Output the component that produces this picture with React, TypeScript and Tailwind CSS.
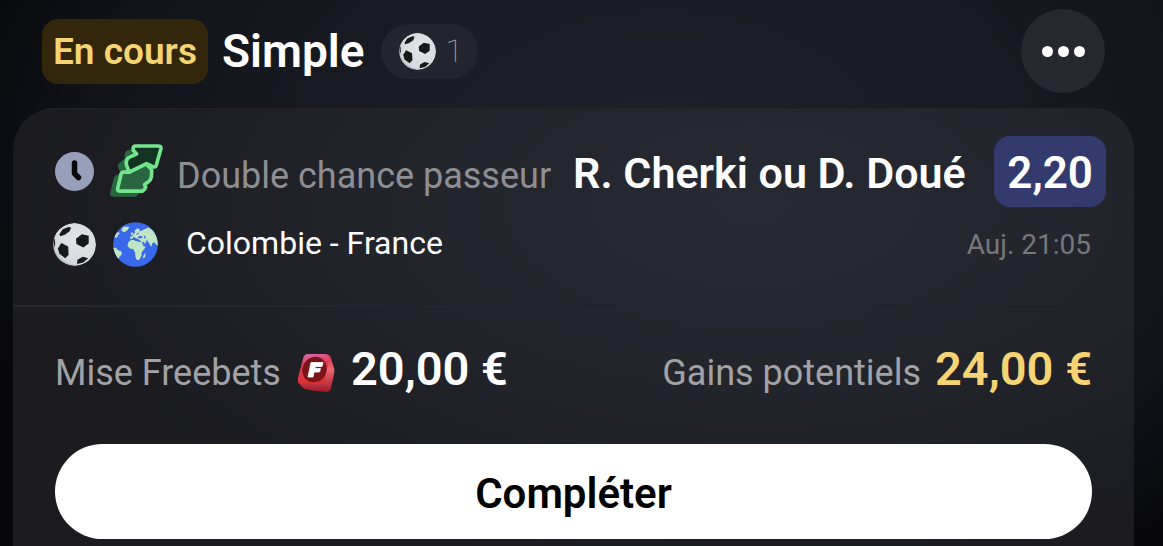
import React from "react";

function Ball({ className }: { className: string }) {
  return (
    <svg viewBox="0 0 44 44" className={className} aria-hidden="true">
      <defs>
        <clipPath id="ballClip">
          <circle cx="22" cy="22" r="22" />
        </clipPath>
        <radialGradient id="ballShade" cx="0.58" cy="0.42" r="0.64">
          <stop offset="0" stopColor="#e2e6ea" />
          <stop offset="0.84" stopColor="#d6dadf" />
          <stop offset="1" stopColor="#969da3" />
        </radialGradient>
      </defs>
      <g clipPath="url(#ballClip)">
        <circle cx="22" cy="22" r="22" fill="url(#ballShade)" />
        <g fill="#17181a">
          <path d="M23.500 16 29.500 11.500 36.500 13 36.500 21 31 25 24 21.500Z" />
          <path d="M6.500 11.500 10 6.500 16 4 18.500 4.500 17 8.500 12 12 7.500 13.500Z" />
          <path d="M5 26 8.500 20.500 15.500 24 16 32.500 12.500 36 6.500 31.500Z" />
          <path d="M25 37.500 30.500 34.500 36 36 31 40.500 24.500 42Z" />
          <path d="M0.800 17 1.800 16 2.200 22 1 25Z" />
        </g>
      </g>
    </svg>
  );
}

function Globe() {
  return (
    <svg viewBox="218 275 137 137" className="size-[45px] shrink-0" aria-hidden="true">
      <defs>
        <clipPath id="globeClip">
          <circle cx="286.500" cy="343.500" r="68" />
        </clipPath>
      </defs>
      <g clipPath="url(#globeClip)">
        <rect x="218" y="275" width="137" height="137" fill="#3a68ea" />
        <g fill="#bfe5c4">
          <path d="M246 293 252 289 268 290 262 300 252 306 244 302Z" />
          <path d="M226 308 236 306 239 310 234 314 230 322 220 322Z" />
          <path d="M216 352 228 354 234 361 244 365 245 373 238 380 235 388 226 382 216 368Z" />
          <path d="M265 336 273 330 284 330 296 334 305 337 311 349 318 350 311 360 305 367 305 378 298 390 290 391 286 380 285 367 280 358 269 356 262 347Z" />
          <path d="M313 374 318 368 316 381 311 387 309 381Z" />
          <path d="M270 326 271 319 278 318 278 313 285 308 284 301 292 294 300 297 298 303 304 302 315 296 326 292 345 304 356 322 356 348 350 344 344 337 338 340 335 350 331 346 326 336 320 334 314 344 306 340 302 333 294 327 286 323 281 320 276 327Z" />
          <path d="M273 309 277 305 279 313 273 315Z" />
        </g>
        <g fill="#3a68ea">
          <path d="M294 320 302 317 309 321 303 325 294 324Z" />
          <path d="M312 316 317 319 317 327 313 324Z" />
          <path d="M308 334 313 338 317 345 313 346 306 337Z" />
          <path d="M319 330 326 335 320 336Z" />
          <path d="M292 309 298 307 294 313 288 312Z" />
          <path d="M278 328 290 327 300 331 302 335 288 333Z" />
        </g>
      </g>
    </svg>
  );
}

function Clock() {
  return (
    <svg viewBox="0 0 39 39" className="size-[39px] shrink-0" aria-hidden="true">
      <circle cx="19.500" cy="19.500" r="19.500" fill="#989fba" />
      <path d="M19.500 11V21.500L23.500 25.500" fill="none" stroke="#08080c" strokeWidth="5.500" strokeLinecap="round" strokeLinejoin="round" />
    </svg>
  );
}

function Arrows() {
  return (
    <svg viewBox="206 41 164 168" className="h-[55px] w-[54px] shrink-0" aria-hidden="true">
      <path
        d="M273 58 300 60 330 110 318 170 288 202H222Q206 202 209 190L220 146Q222 136 234 134L240 128Q232 112 232 104L254 84Q250 64 262 60Z"
        fill="#2a6541"
      />
      <g stroke="#73e68c" strokeWidth="11" strokeLinejoin="round" strokeLinecap="round">
        <path d="M250 127 267 127 320 101 326 110 Q337 116 336 126L335 142Q334 150 324 158L314 165 318 172Q317 178 308 185H238Q230 185 232 177L242 135Q243 128 250 127Z" fill="#2a6541" />
        <path d="M285 47H356Q366 47 364 56L350 106Q347 114 340 110L320 101 267 127 259 105Q256 90 265 83L290 71 280 61Q277 48 285 47Z" fill="#153322" />
      </g>
    </svg>
  );
}

function Freebet() {
  return (
    <svg viewBox="0 0 38 40" className="h-[40px] w-[38px] shrink-0" aria-hidden="true">
      <defs>
        <linearGradient id="chipFace" x1="0.3" y1="0" x2="0.5" y2="1">
          <stop offset="0" stopColor="#d56bae" />
          <stop offset="0.35" stopColor="#dc4156" />
          <stop offset="1" stopColor="#d92d2d" />
        </linearGradient>
        <linearGradient id="chipSide" x1="0" y1="0" x2="0" y2="1">
          <stop offset="0" stopColor="#c62f43" />
          <stop offset="0.4" stopColor="#ef6870" />
          <stop offset="1" stopColor="#a21724" />
        </linearGradient>
      </defs>
      <path d="M11 1H29Q33 1 34 5L37 15Q38 18 37 21L34 35Q33 39 29 39L12 37Q8 37 5 34L1 29 20 12Z" fill="url(#chipSide)" />
      <path d="M11 1H27Q33 1 32 7L28 26Q27 31 22 31L4 30Q0 30 1 25L6 6Q7 1 11 1Z" fill="url(#chipFace)" />
      <ellipse cx="17.500" cy="16.500" rx="12" ry="13" transform="rotate(28 17.500 16.500)" fill="#7c141a" />
      <path d="M14 9.500H26L25 13.500H18.500L18 15.500H23.500L22.500 19H17L16 24H11Z" fill="#fff" stroke="#fff" strokeWidth="0.800" strokeLinejoin="round" />
    </svg>
  );
}

export default function App() {
  return (
    <main className="flex min-h-screen flex-col bg-[#08080c] bg-[radial-gradient(ellipse_62%_90%_at_57%_30%,#1e212d_0%,#191b24_45%,#111319_80%,#08080c_100%)] pr-[29px] pl-[13px] font-['Roboto','Liberation_Sans',sans-serif] text-white">
      <header className="flex items-center pt-[9px] pr-[29px] pb-[15px] pl-[29px]">
        <span className="flex h-[65px] items-center rounded-2xl bg-[#33270b] px-[11px] text-[37px] leading-none font-semibold text-[#f6d373]">
          En cours
        </span>
        <h1 className="ml-[14px] text-[46px] leading-none font-semibold">Simple</h1>
        <span className="ml-4 flex h-[55px] items-center gap-[10px] rounded-full bg-[#23252e] pr-[15px] pl-[18px]">
          <Ball className="size-[37px] shrink-0" />
          <span className="text-[32px] leading-none font-thin text-[#b0b1b5]">1</span>
        </span>
        <button type="button" aria-label="Options" className="ml-auto flex size-[84px] items-center justify-center gap-[5px] rounded-full bg-[#262830]">
          <span className="size-[11px] rounded-full bg-white" />
          <span className="size-[11px] rounded-full bg-white" />
          <span className="size-[11px] rounded-full bg-white" />
        </button>
      </header>

      <section className="grow rounded-t-[42px] border-t border-white/3 bg-[#1b1b20] bg-[radial-gradient(ellipse_66%_85%_at_66%_22%,#272a33_0%,#23252d_45%,#1e1f25_80%,#1b1b20_100%)]">
        <div className="flex items-center pt-[27px] pr-7 pl-[42px]">
          <Clock />
          <span className="ml-[15px] flex">
            <Arrows />
          </span>
          <p className="ml-[14px] flex items-baseline gap-[22px] pt-1 whitespace-nowrap">
            <span className="text-[36px] leading-none text-[#8f8f93]">Double chance passeur</span>
            <strong className="text-[43px] leading-none font-semibold">R. Cherki ou D. Doué</strong>
          </p>
          <span className="ml-auto flex h-[71px] items-center rounded-2xl bg-[#333a6e] px-[13px] pt-0.5 text-[44px] leading-none font-semibold">
            2,20
          </span>
        </div>

        <div className="mt-[15px] flex items-center pr-[43px] pb-[38px] pl-10">
          <Ball className="size-[43px] shrink-0" />
          <span className="ml-[17px] flex">
            <Globe />
          </span>
          <span className="ml-7 pb-1 text-[32px] leading-none">Colombie - France</span>
          <time className="ml-auto text-[28px] leading-none text-[#77777c]">Auj. 21:05</time>
        </div>

        <div className="h-0.5 bg-linear-to-r from-[#262831] via-[#23252e] to-[#202229]" />

        <div className="flex items-baseline justify-between px-[42px] pt-[38px]">
          <p className="flex items-baseline">
            <span className="text-[36px] leading-[48px] text-[#a2a2a6]">Mise Freebets</span>
            <span className="mr-4 ml-4 flex self-center pt-1">
              <Freebet />
            </span>
            <strong className="text-[47px] leading-[48px] font-semibold">20,00 €</strong>
          </p>
          <p className="flex items-baseline gap-[14px]">
            <span className="text-[36px] leading-[48px] text-[#a2a2a6]">Gains potentiels</span>
            <strong className="text-[47px] leading-[48px] font-semibold text-[#f6d373]">24,00 €</strong>
          </p>
        </div>

        <div className="px-[42px] pt-[47px] pb-[7px]">
          <button type="button" className="h-[95px] w-full rounded-full bg-white pt-1 text-[42px] leading-none font-semibold text-black">
            Compléter
          </button>
        </div>
      </section>
    </main>
  );
}
